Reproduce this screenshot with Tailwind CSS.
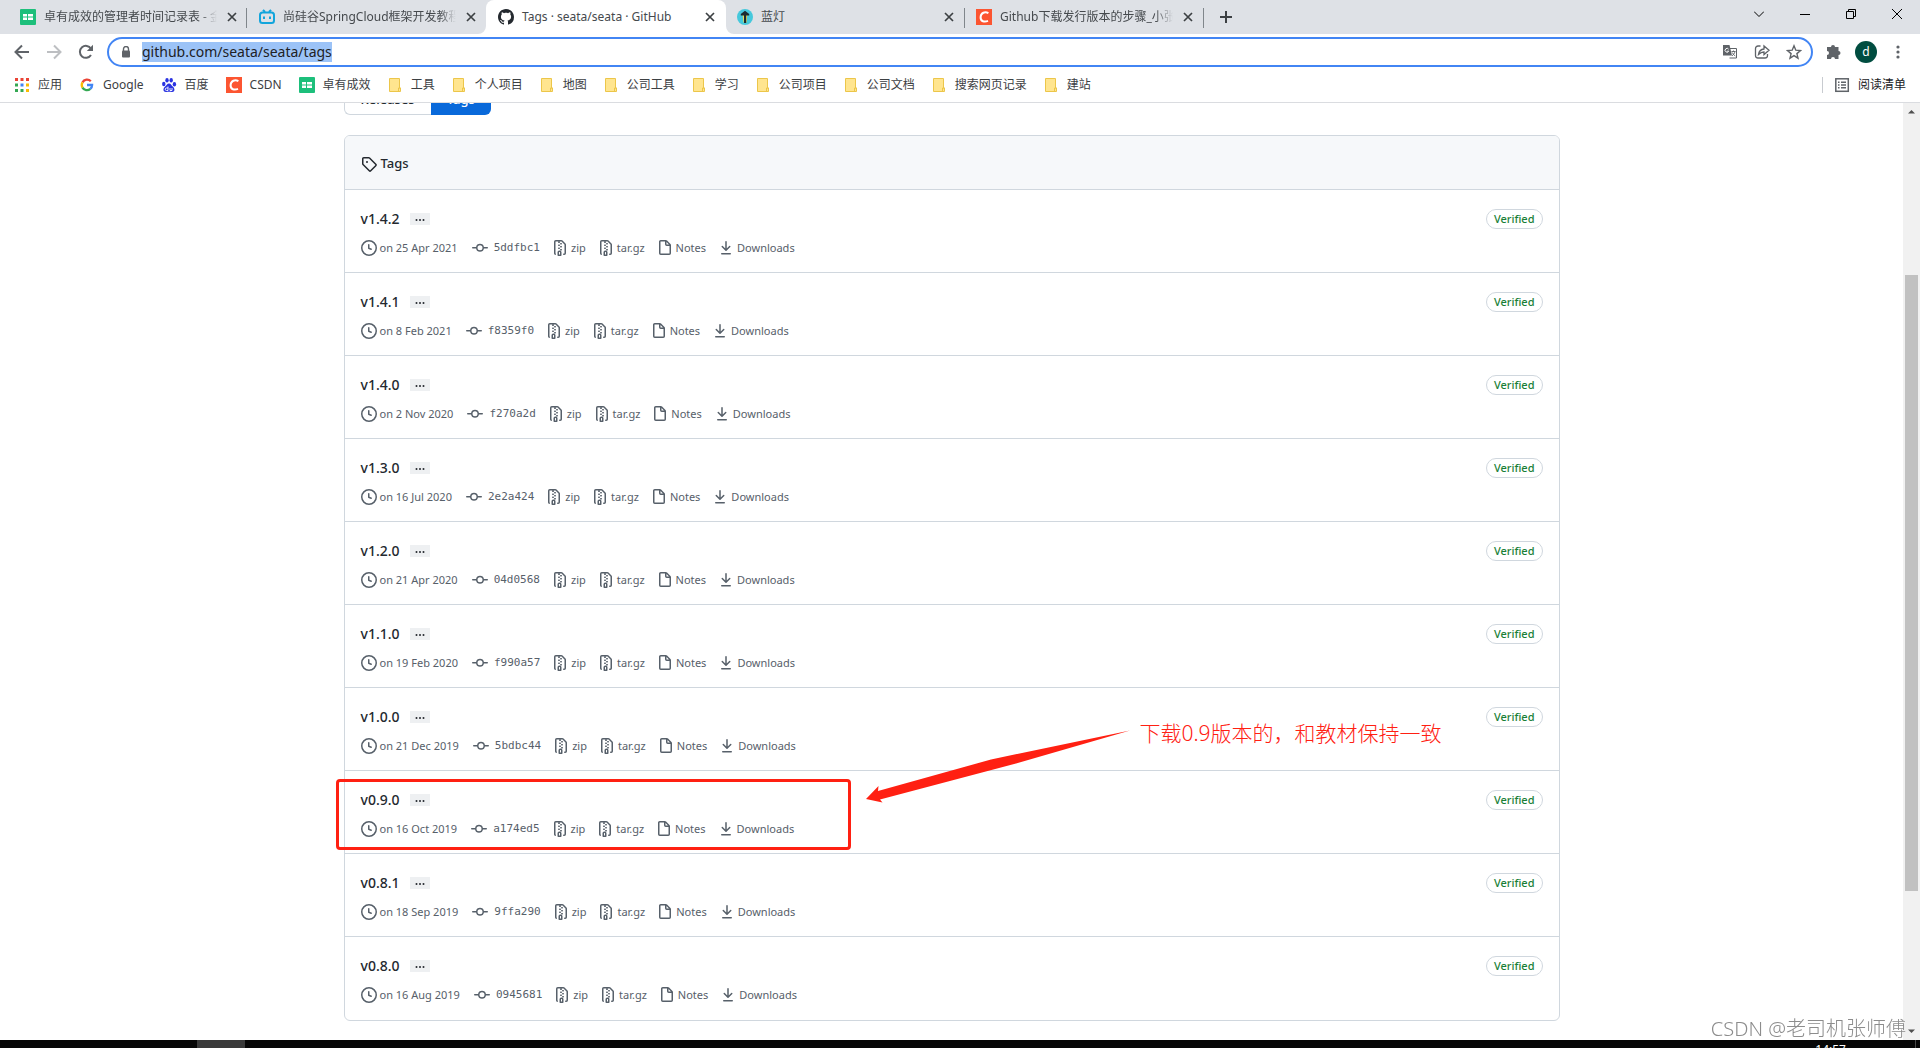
<!DOCTYPE html>
<html lang="zh-CN">
<head>
  <meta charset="UTF-8">
  <meta name="viewport" content="width=device-width, initial-scale=1.0">
  <title>Tags · seata/seata · GitHub</title>
  <script src="https://cdn.jsdelivr.net/npm/@tailwindcss/browser@4"></script>
</head>
<body class="h-screen flex flex-col overflow-hidden bg-white text-[#24292f] font-['Noto_Sans','Noto_Sans_CJK_SC',sans-serif]">
  <!-- Icon sprite -->
  <svg class="hidden">
    <symbol id="i-x" viewBox="0 0 10 10"><path d="M1 1l8 8M9 1l-8 8" stroke="#3c4043" stroke-width="1.7" fill="none"/></symbol>
    <symbol id="i-sheet" viewBox="0 0 16 16"><rect width="16" height="16" rx="1" fill="#1dbf7b"/><path fill="#fff" d="M3 5h4v2.500H3zM8 5h5v2.500H8zM3 8.500h4V11H3zM8 8.500h5V11H8z"/></symbol>
    <symbol id="i-csdn" viewBox="0 0 16 16"><rect width="16" height="16" fill="#fc5531"/><path d="M12.4 4.2C9 2.3 5 3.600 4.600 8c-.3 4.600 4 5.300 7.400 3.900" stroke="#fff" stroke-width="2" fill="none"/></symbol>
    <symbol id="i-folder" viewBox="0 0 16 16"><path d="M2.500 1.500h10v9.500h1v3.500h-11z" fill="#ffe58f" stroke="#ecc64a"/><path d="M11.500 14.500v-3.500h2" fill="none" stroke="#ecc64a"/></symbol>
    <symbol id="i-tag" viewBox="0 0 16 16"><path fill-rule="evenodd" d="M2.5 7.775V2.75a.25.25 0 01.25-.25h5.025a.25.25 0 01.177.073l6.25 6.25a.25.25 0 010 .354l-5.025 5.025a.25.25 0 01-.354 0l-6.25-6.25a.25.25 0 01-.073-.177zm-1.5 0V2.750C1 1.784 1.784 1 2.750 1h5.025c.464 0 .91.184 1.238.513l6.250 6.250a1.750 1.750 0 010 2.474l-5.026 5.026a1.750 1.750 0 01-2.474 0l-6.250-6.250A1.750 1.750 0 011 7.775zM6 5a1 1 0 100 2 1 1 0 000-2z"/></symbol>
    <symbol id="i-clock" viewBox="0 0 16 16"><path fill-rule="evenodd" d="M1.5 8a6.5 6.5 0 1113 0 6.5 6.5 0 01-13 0zM8 0a8 8 0 100 16A8 8 0 008 0zm.5 4.750a.75.75 0 00-1.500 0v3.500a.75.75 0 00.471.696l2.500 1a.75.75 0 00.557-1.392L8.500 7.742V4.750z"/></symbol>
    <symbol id="i-commit" viewBox="0 0 16 16"><path fill-rule="evenodd" d="M10.500 7.750a2.500 2.500 0 11-5 0 2.500 2.500 0 015 0zm1.430.750a4.002 4.002 0 01-7.860 0H.750a.75.75 0 110-1.500h3.320a4.001 4.001 0 017.860 0h3.320a.75.75 0 110 1.500h-3.320z"/></symbol>
    <symbol id="i-zip" viewBox="0 0 16 16"><path fill-rule="evenodd" d="M3.5 1.75a.25.25 0 01.25-.25h3a.75.75 0 000 1.5h.5a.75.75 0 000-1.5h2.086a.25.25 0 01.177.073l2.914 2.914a.25.25 0 01.073.177v8.586a.25.25 0 01-.25.25h-.5a.75.75 0 000 1.5h.5A1.75 1.75 0 0014 13.25V4.664c0-.464-.184-.909-.513-1.237L10.573.513A1.75 1.75 0 009.336 0H3.75A1.75 1.75 0 002 1.75v11.5c0 .649.353 1.214.874 1.515a.75.75 0 10.752-1.298.25.25 0 01-.126-.217V1.75zM8.75 3a.75.75 0 000 1.5h.5a.75.75 0 000-1.5h-.5zM6 5.25a.75.75 0 01.75-.75h.5a.75.75 0 010 1.5h-.5A.75.75 0 016 5.25zm2 1.5A.75.75 0 018.75 6h.5a.75.75 0 010 1.5h-.5A.75.75 0 018 6.75zm-1.25.75a.75.75 0 000 1.5h.5a.75.75 0 000-1.5h-.5zM8 9.75A.75.75 0 018.75 9h.5a.75.75 0 010 1.5h-.5A.75.75 0 018 9.75zm-.75.75a1.75 1.75 0 00-1.75 1.75v3c0 .414.336.75.75.75h2.5a.75.75 0 00.75-.75v-3a1.75 1.75 0 00-1.75-1.75h-.5zM7 12.25a.25.25 0 01.25-.25h.5a.25.25 0 01.25.25v2.25H7v-2.25z"/></symbol>
    <symbol id="i-file" viewBox="0 0 16 16"><path fill-rule="evenodd" d="M3.75 1.5a.25.25 0 00-.25.25v11.5c0 .138.112.25.25.25h8.5a.25.25 0 00.25-.25V6H9.75A1.75 1.75 0 018 4.25V1.5H3.75zm5.75.56v2.19c0 .138.112.25.25.25h2.19L9.5 2.06zM2 1.75C2 .784 2.784 0 3.75 0h5.086c.464 0 .909.184 1.237.513l3.414 3.414c.329.328.513.773.513 1.237v8.086A1.75 1.75 0 0112.25 15h-8.5A1.75 1.75 0 012 13.25V1.75z"/></symbol>
    <symbol id="i-download" viewBox="0 0 16 16"><path fill-rule="evenodd" d="M7.47 10.78a.75.75 0 001.06 0l3.75-3.75a.75.75 0 00-1.06-1.06L8.75 8.44V1.75a.75.75 0 00-1.5 0v6.69L4.78 5.97a.75.75 0 00-1.06 1.06l3.75 3.75zM3.75 13a.75.75 0 000 1.5h8.5a.75.75 0 000-1.5h-8.5z"/></symbol>
  </svg>

  <!-- Tab strip -->
  <header class="h-[34px] shrink-0 flex justify-between bg-[#dee1e6] text-xs text-[#45494d]">
    <div class="flex pl-2">
      <div class="w-[239px] flex items-center pl-3 pr-2 relative">
        <svg class="size-4 shrink-0 mr-2"><use href="#i-sheet"/></svg>
        <span class="flex-1 overflow-hidden whitespace-nowrap mask-r-from-90%">卓有成效的管理者时间记录表 - 金</span>
        <button class="ml-2 p-0.5" aria-label="关闭"><svg class="size-[10px]"><use href="#i-x"/></svg></button>
        <span class="absolute right-0 top-2 h-5 w-px bg-[#80868b]"></span>
      </div>
      <div class="w-[239px] flex items-center pl-3 pr-2">
        <svg class="size-4 shrink-0 mr-2" viewBox="0 0 16 16" fill="none" stroke="#12a5dc" stroke-width="2"><rect x="1" y="3.500" width="14" height="10.500" rx="2.500"/><path d="M4 .8l2 2.200M12 .8l-2 2.200M5 7.500v2.500M11 7.500v2.500"/></svg>
        <span class="flex-1 overflow-hidden whitespace-nowrap mask-r-from-90%">尚硅谷SpringCloud框架开发教程</span>
        <button class="ml-2 p-0.5" aria-label="关闭"><svg class="size-[10px]"><use href="#i-x"/></svg></button>
      </div>
      <div class="w-60 flex items-center pl-3 pr-[9px] bg-white rounded-t-lg relative">
        <svg class="absolute -left-2 bottom-0 size-2" viewBox="0 0 8 8"><path fill="#fff" d="M8 0v8H0a8 8 0 008-8z"/></svg>
        <svg class="absolute -right-2 bottom-0 size-2" viewBox="0 0 8 8"><path fill="#fff" d="M0 0v8h8a8 8 0 01-8-8z"/></svg>
        <svg class="size-4 shrink-0 mr-2" viewBox="0 0 16 16" fill="#24292f"><path d="M8 0C3.580 0 0 3.580 0 8c0 3.540 2.290 6.530 5.470 7.590.4.070.55-.17.55-.38 0-.19-.01-.82-.01-1.490-2.010.37-2.530-.49-2.690-.94-.09-.23-.48-.94-.82-1.130-.28-.15-.68-.52-.01-.53.63-.01 1.080.58 1.230.82.72 1.210 1.870.87 2.330.66.07-.52.28-.87.51-1.070-1.780-.2-3.640-.89-3.640-3.950 0-.87.31-1.590.82-2.150-.08-.2-.36-1.020.08-2.120 0 0 .67-.21 2.200.82.64-.18 1.320-.27 2-.27s1.360.09 2 .27c1.530-1.040 2.200-.82 2.200-.82.44 1.100.16 1.920.08 2.120.51.56.82 1.270.82 2.150 0 3.070-1.870 3.750-3.650 3.950.29.25.54.73.54 1.480 0 1.070-.01 1.930-.01 2.200 0 .21.15.46.55.38A8.010 8.010 0 0016 8c0-4.420-3.580-8-8-8z"/></svg>
        <span class="flex-1 whitespace-nowrap">Tags · seata/seata · GitHub</span>
        <button class="ml-2 p-0.5" aria-label="关闭"><svg class="size-[10px]"><use href="#i-x"/></svg></button>
      </div>
      <div class="w-[239px] flex items-center pl-[11px] pr-[9px] relative">
        <svg class="size-4 shrink-0 mr-2" viewBox="0 0 16 16"><circle cx="8" cy="8" r="8" fill="#45c8dc"/><path d="M5.500 5h5l-1 8.500h-3z" fill="#e8e05a"/><path d="M8 1.800L3.800 5v1.500H7V14h2.200V6.500h3V5z" fill="#1d2b2f"/></svg>
        <span class="flex-1 whitespace-nowrap">蓝灯</span>
        <button class="ml-2 p-0.5" aria-label="关闭"><svg class="size-[10px]"><use href="#i-x"/></svg></button>
        <span class="absolute right-0 top-2 h-5 w-px bg-[#80868b]"></span>
      </div>
      <div class="w-[239px] flex items-center pl-[11px] pr-[9px] relative">
        <svg class="size-4 shrink-0 mr-2"><use href="#i-csdn"/></svg>
        <span class="flex-1 overflow-hidden whitespace-nowrap mask-r-from-90%">Github下载发行版本的步骤_小张</span>
        <button class="ml-2 p-0.5" aria-label="关闭"><svg class="size-[10px]"><use href="#i-x"/></svg></button>
        <span class="absolute right-0 top-2 h-5 w-px bg-[#80868b]"></span>
      </div>
      <button class="px-4" aria-label="新标签页"><svg class="size-3" viewBox="0 0 12 12"><path d="M6 0v12M0 6h12" stroke="#3c4043" stroke-width="2"/></svg></button>
    </div>
    <div class="flex h-7 items-center">
      <button class="w-[46px] flex justify-center" aria-label="搜索标签页"><svg class="size-[10px]" viewBox="0 0 10 10"><path d="M0 2.500l5 5 5-5" fill="none" stroke="#000"/></svg></button>
      <button class="w-[46px] flex justify-center" aria-label="最小化"><svg class="size-[10px]" viewBox="0 0 10 10"><path d="M0 5.500h10" stroke="#000"/></svg></button>
      <button class="w-[46px] flex justify-center" aria-label="还原"><svg class="size-[10px]" viewBox="0 0 10 10"><path d="M.5 2.500h7v7h-7zM2.500 2V.5h7v7H8" fill="none" stroke="#000"/></svg></button>
      <button class="w-[46px] flex justify-center" aria-label="关闭窗口"><svg class="size-[10px]" viewBox="0 0 10 10"><path d="M0 0l10 10M10 0L0 10" stroke="#000"/></svg></button>
    </div>
  </header>

  <!-- Address bar -->
  <div class="h-9 shrink-0 flex items-center pl-3.5 pr-3.5">
    <button class="mr-4" aria-label="后退"><svg class="size-4" viewBox="0 0 16 16"><path d="M15 8H2M8 1.500L1.500 8 8 14.500" fill="none" stroke="#5f6368" stroke-width="2"/></svg></button>
    <button class="mr-4" aria-label="前进"><svg class="size-4" viewBox="0 0 16 16"><path d="M1 8h13M8 1.500L14.500 8 8 14.500" fill="none" stroke="#bdbfc2" stroke-width="2"/></svg></button>
    <button class="mr-[13px]" aria-label="重新加载"><svg class="size-4" viewBox="0 0 16 16"><path d="M13 11A6 6 0 1113 4.700" fill="none" stroke="#5f6368" stroke-width="2"/><path d="M15 .8v6.200H8.800z" fill="#5f6368"/></svg></button>
    <div class="flex-1 h-[30px] flex items-center rounded-full border-2 border-[#4285f4] pl-[12px] pr-[9px]">
      <svg class="w-[10px] h-3 mr-[11px]" viewBox="0 0 10 12"><path d="M2.500 5V3a2.500 2.500 0 015 0v2" fill="none" stroke="#5f6368" stroke-width="1.400"/><rect x="1" y="4.500" width="8" height="7" rx="1" fill="#5f6368"/></svg>
      <input type="text" aria-label="地址栏" value="github.com/seata/seata/tags" class="field-sizing-content h-5 text-sm leading-5 bg-[#9cc3f7] text-[#202124] outline-none">
      <div class="ml-auto flex items-center gap-4">
        <button aria-label="翻译"><svg class="size-4" viewBox="0 0 16 16"><path d="M6.500 4.500h8v9.500h-7" fill="none" stroke="#5f6368"/><path d="M1 1h6.500l2.500 10.500H1z" fill="#5f6368"/><path d="M6.600 5.200a1.900 1.900 0 10.100 2H5.100" fill="none" stroke="#fff"/><path d="M9.500 7.500h4M11.500 6.500v1M13 7.500c-.5 2-1.500 3.300-3 4.300M10.300 8.500c.6 1.500 1.600 2.700 3 3.500" fill="none" stroke="#5f6368" stroke-width=".9"/></svg></button>
        <button aria-label="分享"><svg class="size-4" viewBox="0 0 16 16" fill="none" stroke="#5f6368" stroke-width="1.300"><path d="M6.500 2H4a2.500 2.500 0 00-2.500 2.500v7A2.500 2.500 0 004 14h7a2.500 2.500 0 002.500-2.500V10"/><path d="M4.500 10.500C5 7 7 5.200 10 5V2l5 4.300L10 10.500V8C7.500 8 6 9 4.500 10.500z"/></svg></button>
        <button aria-label="收藏"><svg class="size-4" viewBox="0 0 16 16"><path d="M8 1.800l1.800 4.400 4.700.4-3.600 3 1.100 4.600L8 11.700l-4 2.500 1.100-4.600-3.600-3 4.700-.4z" fill="none" stroke="#5f6368" stroke-width="1.400"/></svg></button>
      </div>
    </div>
    <button class="ml-[13px]" aria-label="扩展程序"><svg class="size-4" viewBox="0 0 16 16"><path d="M5 3a2 2 0 014 0h3.500v4a2 2 0 010 4v4H9a2 2 0 00-4 0H1v-4a2 2 0 000-4V3z" fill="#5f6368"/></svg></button>
    <button class="ml-[13px] size-[22px] rounded-full bg-[#004d40] text-white text-xs leading-5" aria-label="账户">d</button>
    <button class="ml-[13px]" aria-label="菜单"><svg class="size-4" viewBox="0 0 16 16" fill="#5f6368"><circle cx="8" cy="3" r="1.600"/><circle cx="8" cy="8" r="1.600"/><circle cx="8" cy="13" r="1.600"/></svg></button>
  </div>

  <!-- Bookmarks bar -->
  <nav class="h-[33px] shrink-0 flex items-center border-b border-[#dadce0] pl-3.5 pr-3.5 pb-0.5 text-xs text-[#3c4043]">
    <div class="flex items-center gap-[17px]">
      <a href="#" class="flex items-center gap-2"><svg class="size-4" viewBox="0 0 16 16"><path fill="#ea4335" d="M1 1h3v3H1zM6.500 1h3v3h-3zM12 1h3v3h-3z"/><path fill="#34a853" d="M1 6.500h3v3H1zM1 12h3v3H1z"/><path fill="#4285f4" d="M6.500 6.500h3v3h-3z"/><path fill="#34a853" d="M6.500 12h3v3h-3z"/><path fill="#fbbc04" d="M12 6.500h3v3h-3zM12 12h3v3h-3z"/></svg>应用</a>
      <a href="#" class="flex items-center gap-2"><svg class="size-4" viewBox="0 0 16 16" fill="none" stroke-width="2.300"><path stroke="#ea4335" d="M3.500 5.400A5.100 5.100 0 0111.800 4.300"/><path stroke="#fbbc04" d="M3.500 5.400a5.100 5.100 0 000 5.200"/><path stroke="#34a853" d="M3.500 10.600a5.100 5.100 0 007.800 1.300"/><path stroke="#4285f4" d="M8 8h5.100c0 1.700-.7 3-1.800 3.900"/></svg>Google</a>
      <a href="#" class="flex items-center gap-2"><svg class="size-4" viewBox="0 0 16 16" fill="#2932e1"><ellipse cx="2.800" cy="7" rx="1.700" ry="2.200"/><ellipse cx="6" cy="3.200" rx="1.700" ry="2.300"/><ellipse cx="10.200" cy="3.200" rx="1.700" ry="2.300"/><ellipse cx="13.400" cy="7.200" rx="1.700" ry="2.200"/><path d="M8 6.500c2 0 2.500 2 4 3.300 2.500 2.200 1.500 5.700-1.200 5.200-1.800-.3-3.600-.3-5.400 0-3 .5-4-3-1.500-5.200C5.500 8.500 6 6.500 8 6.500z"/><path d="M7 9.500v4H5.500a1.200 1.200 0 010-2.500H7M9 11v2.500h2V11" fill="none" stroke="#fff" stroke-width=".9"/></svg>百度</a>
      <a href="#" class="flex items-center gap-2"><svg class="size-4"><use href="#i-csdn"/></svg>CSDN</a>
      <a href="#" class="flex items-center gap-2"><svg class="size-4"><use href="#i-sheet"/></svg>卓有成效</a>
    </div>
    <div id="folders" class="flex-1 flex items-center gap-4 ml-4"></div>
    <button class="flex items-center gap-2 border-l border-[#c8cbd0] pl-[11px] text-[#202124]"><svg class="size-4" viewBox="0 0 16 16"><rect x="1.800" y="1.800" width="12.500" height="12.500" fill="none" stroke="#5f6368" stroke-width="1.500"/><path d="M4 5.200h1.500M4 8h1.500M4 10.800h1.500M7 5.200h5M7 8h5M7 10.800h5" stroke="#5f6368" stroke-width="1.400"/></svg>阅读清单</button>
  </nav>

  <!-- Page -->
  <div class="flex-1 min-h-0 flex">
    <main class="flex-1 overflow-hidden">
      <div class="relative flow-root max-w-[1216px] mx-auto">
        <nav class="-mt-5 flex text-[13px] font-medium">
          <a href="#" class="h-8 px-4 leading-[30px] border border-r-0 border-[#d0d7de] rounded-l-md">Releases</a>
          <a href="#" class="h-8 px-4 leading-8 bg-[#0969da] text-white rounded-r-md">Tags</a>
        </nav>

        <section class="mt-5 border border-[#d0d7de] rounded-md overflow-hidden">
          <h2 class="flex items-center gap-1 px-4 pt-[17px] pb-[15px] bg-[#f6f8fa] text-[13px] leading-[21px] font-medium">
            <svg class="size-4" fill="currentColor"><use href="#i-tag"/></svg>Tags
          </h2>
          <ul id="tagList"></ul>
        </section>

        <!-- Annotation over the v0.9.0 row -->
        <div class="absolute -left-2 top-[676px] w-[515px] h-[71px] border-[3px] border-[#ff2012] rounded-sm pointer-events-none"></div>
        <svg class="absolute left-[522px] top-[627px] w-[265px] h-[76px] pointer-events-none" viewBox="0 0 265 76" fill="#ff2012"><path d="M0 69L12.500 56l-.5 5L125 29.500 264 .5 150 33.500 14 69.500l2.500 3z"/></svg>
        <p class="absolute left-[796px] top-[614px] text-[21px] leading-8 font-light text-[#ff2012] whitespace-nowrap">下载0.9版本的，和教材保持一致</p>
      </div>
    </main>

    <!-- Scrollbar -->
    <div class="w-[17px] shrink-0 bg-[#f1f1f1] flex flex-col items-center">
      <svg class="w-[17px] h-[17px]" viewBox="0 0 17 17"><path d="M5 10.500h7L8.500 7z" fill="#505050"/></svg>
      <div class="w-[13px] flex-[155]"></div>
      <div class="w-[13px] flex-[616] bg-[#c1c1c1]"></div>
      <div class="w-[13px] flex-[132]"></div>
      <svg class="w-[17px] h-[17px]" viewBox="0 0 17 17"><path d="M5 6.500h7L8.500 10z" fill="#505050"/></svg>
    </div>
  </div>

  <!-- Taskbar -->
  <footer class="h-2 shrink-0 flex justify-between bg-[#070707] overflow-hidden pl-[197px]">
    <span class="w-12 bg-[#3a3a3a]"></span>
    <div class="flex border-r border-[#4a4a4a] mr-1">
      <time class="mr-[69px] pt-0.5 text-xs leading-4 text-white">14:57</time>
    </div>
  </footer>

  <p class="fixed right-3.5 bottom-1 text-xl leading-[30px] font-light text-[#8c8c8c] whitespace-nowrap">CSDN @老司机张师傅</p>

  <script>
    const folders = ['工具', '个人项目', '地图', '公司工具', '学习', '公司项目', '公司文档', '搜索网页记录', '建站'];
    document.getElementById('folders').innerHTML = folders.map(name => `
      <a href="#" class="flex items-center gap-2"><svg class="size-4"><use href="#i-folder"/></svg>${name}</a>`).join('');

    const tags = [
      ['v1.4.2', '25 Apr 2021', '5ddfbc1'],
      ['v1.4.1', '8 Feb 2021', 'f8359f0'],
      ['v1.4.0', '2 Nov 2020', 'f270a2d'],
      ['v1.3.0', '16 Jul 2020', '2e2a424'],
      ['v1.2.0', '21 Apr 2020', '04d0568'],
      ['v1.1.0', '19 Feb 2020', 'f990a57'],
      ['v1.0.0', '21 Dec 2019', '5bdbc44'],
      ['v0.9.0', '16 Oct 2019', 'a174ed5'],
      ['v0.8.1', '18 Sep 2019', '9ffa290'],
      ['v0.8.0', '16 Aug 2019', '0945681'],
    ];
    document.getElementById('tagList').innerHTML = tags.map(([name, date, sha]) => `
      <li class="flex items-start justify-between border-t border-[#d0d7de] px-4 pt-[17px] pb-3.5 last:pb-[15px]">
        <div>
          <div class="flex items-center gap-[10px] h-6">
            <a href="#" class="text-sm font-medium">${name}</a>
            <button class="w-5 h-3 flex items-center justify-center bg-[#eef0f2]" aria-label="展开"><svg class="w-[10px] h-1 mt-0.5" viewBox="0 0 10 4" fill="#24292f"><circle cx="1.500" cy="2" r="1"/><circle cx="5" cy="2" r="1"/><circle cx="8.500" cy="2" r="1"/></svg></button>
          </div>
          <div class="mt-[7px] h-5 flex items-center text-[11px] text-[#57606a] whitespace-nowrap">
            <svg class="size-4 mr-[3px]" fill="currentColor"><use href="#i-clock"/></svg>on ${date}
            <a href="#" class="ml-3.5 flex items-center gap-1.5 font-['DejaVu_Sans_Mono',monospace]"><svg class="size-4" fill="currentColor"><use href="#i-commit"/></svg>${sha}</a>
            <a href="#" class="ml-3 flex items-center gap-[3px]"><svg class="size-4" fill="currentColor"><use href="#i-zip"/></svg>zip</a>
            <a href="#" class="ml-3 flex items-center gap-[3px]"><svg class="size-4" fill="currentColor"><use href="#i-zip"/></svg>tar.gz</a>
            <a href="#" class="ml-3 flex items-center gap-[3px]"><svg class="size-4" fill="currentColor"><use href="#i-file"/></svg>Notes</a>
            <a href="#" class="ml-3 flex items-center gap-[3px]"><svg class="size-4" fill="currentColor"><use href="#i-download"/></svg>Downloads</a>
          </div>
        </div>
        <button class="mt-[2px] h-5 px-[7px] border border-[#d0d7de] rounded-full text-[11px] leading-[18px] font-medium text-[#1a7f37]">Verified</button>
      </li>`).join('');
  </script>
</body>
</html>
